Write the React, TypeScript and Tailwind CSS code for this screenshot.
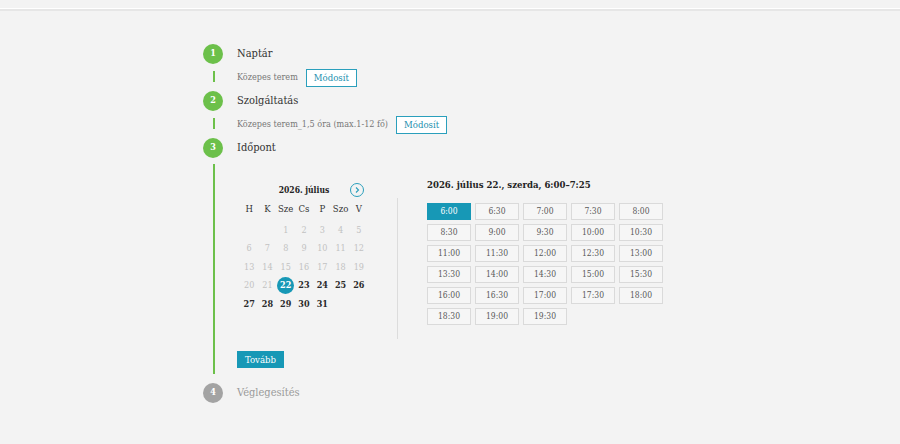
import { ReactNode } from "react";

const weekDays = ["H", "K", "Sze", "Cs", "P", "Szo", "V"];

// július 2026 starts on a Wednesday; 22 is the chosen day
const days: (number | null)[] = [null, null, ...Array.from({ length: 31 }, (_, i) => i + 1)];

const times = [
  "6:00", "6:30", "7:00", "7:30", "8:00",
  "8:30", "9:00", "9:30", "10:00", "10:30",
  "11:00", "11:30", "12:00", "12:30", "13:00",
  "13:30", "14:00", "14:30", "15:00", "15:30",
  "16:00", "16:30", "17:00", "17:30", "18:00",
  "18:30", "19:00", "19:30",
];

const StepHeader = ({ n, label, done = true }: { n: number; label: string; done?: boolean }) => (
  <div className="flex items-center h-[20px]">
    <div
      className={`w-[20px] h-[20px] rounded-full flex items-center justify-center text-white text-[9px] font-bold ${
        done ? "bg-[#6cc04a]" : "bg-[#a3a3a3]"
      }`}
    >
      {n}
    </div>
    <span className={`ml-[14px] text-[11px] ${done ? "text-[#333]" : "text-[#9a9a9a]"}`}>{label}</span>
  </div>
);

const StepBody = ({ children, lineClass }: { children: ReactNode; lineClass: string }) => (
  <div className="flex">
    <div className={`w-[20px] flex justify-center ${lineClass}`}>
      <div className="w-[2px] bg-[#6cc04a] ml-[1px]" />
    </div>
    <div className="ml-[14px] flex-1">{children}</div>
  </div>
);

const EditButton = () => (
  <button className="h-[18px] px-[7px] border border-[#2a9fbc] bg-white text-[9.5px] leading-none text-[#1b8fae]">
    Módosít
  </button>
);

const Calendar = () => (
  <div className="pt-[24px] pl-[3px] w-[161px]">
    <div className="grid grid-cols-7 w-[128px] h-[16px] items-center">
      <span className="col-start-2 col-span-5 text-center text-[8.5px] font-bold text-[#222]">2026. július</span>
      <div className="flex justify-center">
        <div className="w-[14px] h-[14px] rounded-full border border-[#2a9fbc] flex items-center justify-center -ml-[3px]">
          <svg width="8" height="8" viewBox="0 0 8 8" fill="none" stroke="#2a9fbc" strokeWidth="1.1">
            <path d="M3 1.5 5.5 4 3 6.5" />
          </svg>
        </div>
      </div>
    </div>
    <div className="border-r border-[#dcdcdc] h-[141px] -ml-[3px] pl-[3px]">
      <div className="grid grid-cols-7 w-[128px] h-[22px] items-center text-[9.5px] text-[#333]">
        {weekDays.map((d) => (
          <span key={d} className="text-center">{d}</span>
        ))}
      </div>
      <div className="grid grid-cols-7 w-[128px] mt-[1px]">
        {days.map((d, i) => (
          <div key={i} className="h-[18.5px] flex items-center justify-center">
            {d === null ? null : d === 22 ? (
              <span className="w-[17px] h-[17px] rounded-full bg-[#1798b6] text-white text-[9px] font-bold flex items-center justify-center">
                22
              </span>
            ) : (
              <span className={`text-[9px] ${d < 22 ? "text-[#c2c2c2]" : "text-[#2a2a2a] font-bold"}`}>{d}</span>
            )}
          </div>
        ))}
      </div>
    </div>
  </div>
);

const TimePicker = () => (
  <div className="pt-[20px] pl-[29px]">
    <div className="h-[14px] leading-[14px] text-[9.5px] font-bold text-[#222]">2026. július 22., szerda, 6:00–7:25</div>
    <div className="grid grid-cols-[repeat(5,44px)] gap-x-[4px] gap-y-[4px] mt-[11px]">
      {times.map((t, i) => (
        <div
          key={t}
          className={`h-[17px] flex items-center justify-center text-[8.5px] border ${
            i === 0
              ? "bg-[#1798b6] border-[#1798b6] text-white"
              : "bg-[#f6f6f6] border-[#dadada] text-[#5a5a5a]"
          }`}
        >
          {t}
        </div>
      ))}
    </div>
  </div>
);

export default function App() {
  return (
    <div
      className="min-h-screen bg-[#f3f3f3]"
      style={{ fontFamily: '"DejaVu Serif", "Liberation Serif", serif', fontStretch: "condensed" }}
    >
      <div className="h-[8px]" />
      <div className="h-[1px] bg-white" />
      <div className="h-[2px] bg-[#e6e6e6]" />

      <div className="pl-[203px] pt-[33px]">
        <StepHeader n={1} label="Naptár" />
        <StepBody lineClass="pt-[7px] pb-[9px]">
          <div className="flex items-center h-[27px]">
            <span className="text-[9px] text-[#777]">Közepes terem</span>
            <div className="ml-[8px] flex"><EditButton /></div>
          </div>
        </StepBody>

        <StepHeader n={2} label="Szolgáltatás" />
        <StepBody lineClass="pt-[7px] pb-[9px]">
          <div className="flex items-center h-[27px]">
            <span className="text-[9px] text-[#777]">Közepes terem_1,5 óra (max.1-12 fő)</span>
            <div className="ml-[8px] flex"><EditButton /></div>
          </div>
        </StepBody>

        <StepHeader n={3} label="Időpont" />
        <StepBody lineClass="pt-[6px] pb-[9px]">
          <div className="h-[225px] flex flex-col">
            <div className="flex items-start">
              <Calendar />
              <TimePicker />
            </div>
            <button className="mt-[12px] h-[17px] w-[47px] bg-[#1798b6] text-white text-[9.5px] leading-none">
              Tovább
            </button>
          </div>
        </StepBody>

        <StepHeader n={4} label="Véglegesítés" done={false} />
      </div>
    </div>
  );
}
